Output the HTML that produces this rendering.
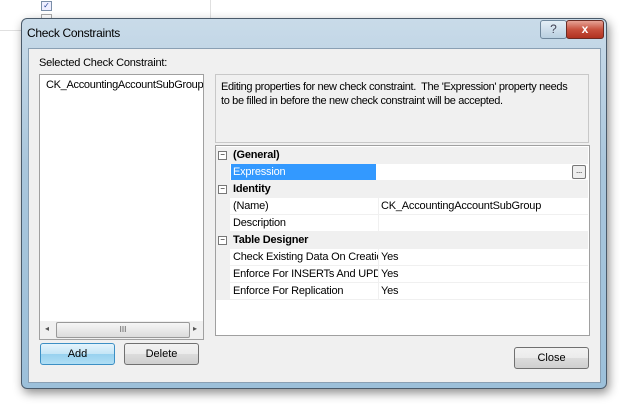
<html><head><style>
body{margin:0;width:628px;height:406px;background:#fff;font-family:"Liberation Sans",sans-serif;font-size:11px;color:#000;position:relative;overflow:hidden}
.a{position:absolute}
.win{left:21px;top:18px;width:584px;height:369px;border:1px solid #4a5a6a;border-radius:6px;background:linear-gradient(#c9dbe9,#a9c6dc 40%,#9cc0da);box-shadow:2px 4px 10px rgba(0,0,0,.45)}
.client{left:6px;top:29px;width:571px;height:333px;background:#f0f0f0;border:1px solid #8aa0b4}
.btn{border:1px solid #707070;border-radius:3px;background:linear-gradient(#f2f2f2,#ebebeb 50%,#dcdcdc 51%,#cfcfcf);text-align:center;line-height:20px;font-size:11px}
.row{position:absolute;left:0;width:372px;height:16px;line-height:16px;border-bottom:1px solid #f0f0f0;letter-spacing:-0.2px}
.cat{background:#f0f0f0;font-weight:bold}
.lab{position:absolute;left:15px;width:145px;overflow:hidden;white-space:nowrap;padding-left:2px}
.val{position:absolute;left:162px;padding-left:2px;border-left:1px solid #f0f0f0;height:16px}
.box{position:absolute;left:2px;top:4px;width:7px;height:7px;border:1px solid #777;background:#fff;font-size:8px;line-height:6px;text-align:center;font-weight:normal;z-index:2}
</style></head><body>
<div class="a" style="left:0;top:0;width:210px;height:30px;border-right:1px solid #e0e0e0;border-bottom:1px solid #e0e0e0"></div>
<div class="a" style="left:41px;top:1px;width:9px;height:8px;border:1px solid #7a8ea8;background:#eef;font-size:8px;line-height:8px;text-align:center;color:#2a4a9a">✓</div>
<div class="a" style="left:41px;top:14px;width:9px;height:3px;border:1px solid #aaa;border-bottom:none"></div>
<div class="a win">
 <div class="a" style="left:5px;top:7px;font-size:12px;letter-spacing:-0.3px">Check Constraints</div>
 <div class="a" style="left:518px;top:1px;width:25px;height:17px;border:1px solid #6f879c;border-radius:3px;background:linear-gradient(#e4eef6,#b9cfe0);text-align:center;color:#445;font-size:12px;line-height:17px">?</div>
 <div class="a" style="left:544px;top:1px;width:36px;height:17px;border:1px solid #6b2a22;border-radius:3px;background:linear-gradient(#e6a396,#c8513e 50%,#b03220);text-align:center;color:#fff;font-weight:bold;font-size:12px;line-height:17px">x</div>
 <div class="a client">
  <div class="a" style="left:10px;top:8px;letter-spacing:-0.2px">Selected Check Constraint:</div>
  <div class="a" style="left:10px;top:25px;width:163px;height:264px;background:#fff;border:1px solid #a0a0a0">
   <div class="a" style="left:6px;top:4px;white-space:nowrap;width:157px;overflow:hidden;letter-spacing:-0.3px">CK_AccountingAccountSubGroup</div>
   <div class="a" style="left:0;top:246px;width:163px;height:18px;background:#f0f0f0">
    <div class="a" style="left:5px;top:3px;font-size:8px;color:#555">◂</div>
    <div class="a" style="left:16px;top:1px;width:132px;height:14px;border:1px solid #999;border-radius:2px;background:linear-gradient(#f6f6f6,#dcdcdc);text-align:center;font-size:8px;line-height:14px;color:#555">III</div>
    <div class="a" style="left:153px;top:3px;font-size:8px;color:#555">▸</div>
   </div>
  </div>
  <div class="a" style="left:186px;top:25px;width:367px;height:62px;background:#f0f0f0;border:1px solid #c8c8c8;padding:5px 0 0 5px;line-height:14px;font-size:11px;letter-spacing:-0.35px;white-space:nowrap">Editing properties for new check constraint.&nbsp; The 'Expression' property needs<br>to be filled in before the new check constraint will be accepted.</div>
  <div class="a" style="left:186px;top:96px;width:373px;height:189px;background:#fff;border:1px solid #a0a0a0">
   <div class="a" style="left:0;top:1px;width:14px;height:153px;background:#f0f0f0"></div>
   <div class="row cat" style="top:1px"><div class="box">−</div><div class="lab">(General)</div></div>
   <div class="row" style="top:18px"><div class="lab" style="background:#3399ff;color:#fff;width:143px">Expression</div><div class="a" style="right:2px;top:1px;width:12px;height:12px;border:1px solid #777;border-radius:2px;background:#eee;font-size:8px;line-height:10px;text-align:center">...</div></div>
   <div class="row cat" style="top:35px"><div class="box">−</div><div class="lab">Identity</div></div>
   <div class="row" style="top:52px"><div class="lab">(Name)</div><div class="val">CK_AccountingAccountSubGroup</div></div>
   <div class="row" style="top:69px"><div class="lab">Description</div><div class="val"></div></div>
   <div class="row cat" style="top:86px"><div class="box">−</div><div class="lab">Table Designer</div></div>
   <div class="row" style="top:103px"><div class="lab">Check Existing Data On Creation</div><div class="val">Yes</div></div>
   <div class="row" style="top:120px"><div class="lab">Enforce For INSERTs And UPDATEs</div><div class="val">Yes</div></div>
   <div class="row" style="top:137px"><div class="lab">Enforce For Replication</div><div class="val">Yes</div></div>
  </div>
  <div class="a btn" style="left:11px;top:294px;width:73px;height:20px;border-color:#3c8fc4;background:linear-gradient(#e5f4fc,#c4e5f6 50%,#98d1ef 51%,#b0def4)">Add</div>
  <div class="a btn" style="left:95px;top:294px;width:73px;height:20px">Delete</div>
  <div class="a btn" style="left:485px;top:298px;width:73px;height:20px">Close</div>
 </div>
</div>
</body></html>
